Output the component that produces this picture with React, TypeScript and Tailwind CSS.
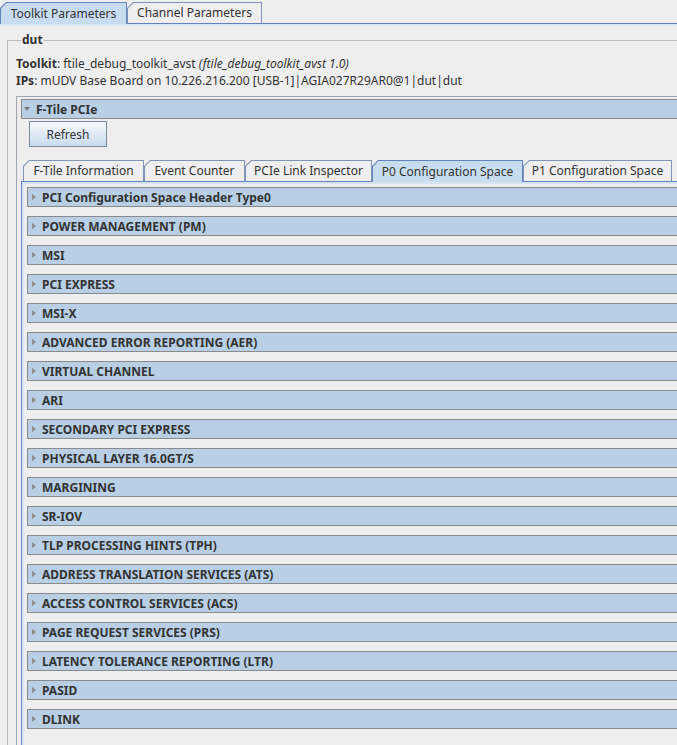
type TabProps = { label: string; selected?: boolean; width: string };

function Tab({ label, selected, width }: TabProps) {
  return (
    <div
      className={`${width} ${
        selected ? "relative z-10 -mb-px h-[22px] bg-[#6382bf]" : "h-[21px] bg-[#8194b6]"
      } px-px pt-px [clip-path:polygon(6px_0,100%_0,100%_100%,0_100%,0_6px)]`}
    >
      <div
        className={`${
          selected ? "bg-[#c8dcf0]" : "bg-[#eeeeee]"
        } flex h-full items-center justify-center pb-px whitespace-nowrap [clip-path:polygon(5.5px_0,100%_0,100%_100%,0_100%,0_5.5px)]`}
      >
        {label}
      </div>
    </div>
  );
}

function Section({ title }: { title: string }) {
  return (
    <div className="flex h-[20px] items-center border border-[#8a8a8a] bg-[#b8cfe5] pl-[4px]">
      <span className="h-0 w-0 border-y-[3.5px] border-l-[4px] border-y-transparent border-l-[#8c8c8c]" />
      <span className="ml-[6px] font-bold text-[#333333]">{title}</span>
    </div>
  );
}

const sections = [
  "PCI Configuration Space Header Type0",
  "POWER MANAGEMENT (PM)",
  "MSI",
  "PCI EXPRESS",
  "MSI-X",
  "ADVANCED ERROR REPORTING (AER)",
  "VIRTUAL CHANNEL",
  "ARI",
  "SECONDARY PCI EXPRESS",
  "PHYSICAL LAYER 16.0GT/S",
  "MARGINING",
  "SR-IOV",
  "TLP PROCESSING HINTS (TPH)",
  "ADDRESS TRANSLATION SERVICES (ATS)",
  "ACCESS CONTROL SERVICES (ACS)",
  "PAGE REQUEST SERVICES (PRS)",
  "LATENCY TOLERANCE REPORTING (LTR)",
  "PASID",
  "DLINK",
];

export default function App() {
  return (
    <div className="h-[745px] w-[677px] overflow-hidden bg-[#eeeeee] font-['Noto_Sans',sans-serif] text-[12px] leading-[17px] text-[#333333]">
      <div className="w-[730px]">
        {/* top tabs */}
        <div className="flex h-[24px] items-end border-b border-[#6382bf]">
          <Tab label="Toolkit Parameters" selected width="w-[127px]" />
          <Tab label="Channel Parameters" width="w-[135px]" />
        </div>

        <div className="h-[740px] pt-[8px] shadow-[inset_0_2px_0_#dae6f2]">
          <fieldset className="ml-[7px] h-[760px] border border-[#b8b8b8] pl-[8px]">
            <legend className="ml-[5px] px-[1px] font-bold leading-[16px]">dut</legend>
            <div className="pt-[7px]">
              <div>
                <span className="font-bold">Toolkit</span>: ftile_debug_toolkit_avst{" "}
                <span className="italic">(ftile_debug_toolkit_avst 1.0)</span>
              </div>
              <div>
                <span className="font-bold">IPs</span>: mUDV Base Board on 10.226.216.200
                [USB-1]|AGIA027R29AR0@1|dut|dut
              </div>
            </div>

            {/* F-Tile PCIe panel */}
            <div className="mt-[7px] h-[700px] border border-[#a0a6b0] pl-[4px] pt-[2px]">
              <div className="flex h-[20px] items-center border border-[#8a8a8a] bg-[#b8cfe5] pl-[2px]">
                <span className="h-0 w-0 border-x-[3.5px] border-t-[4px] border-x-transparent border-t-[#7a7a7a]" />
                <span className="ml-[6px] font-bold">F-Tile PCIe</span>
              </div>
              <button className="ml-[8px] mt-[2px] flex h-[26px] w-[78px] items-center justify-center border border-[#7a8aa6] bg-gradient-to-b from-[#f6f9fc] to-[#c9dbee] text-[#333333]">
                Refresh
              </button>

              <div className="mt-[13px] flex h-[22px] items-end border-b border-[#6382bf] pl-[2px]">
                <Tab label="F-Tile Information" width="w-[121px]" />
                <Tab label="Event Counter" width="w-[101px]" />
                <Tab label="PCIe Link Inspector" width="w-[127px]" />
                <Tab label="P0 Configuration Space" selected width="w-[151px]" />
                <Tab label="P1 Configuration Space" width="w-[149px]" />
              </div>

              <div className="h-[600px] border-l border-[#6382bf] pl-[5px] pt-[5px] shadow-[inset_2px_2px_0_#d6e3f1]">
                <div className="flex flex-col gap-[9px]">
                  {sections.map((s) => (
                    <Section key={s} title={s} />
                  ))}
                </div>
              </div>
            </div>
          </fieldset>
        </div>
      </div>
    </div>
  );
}
